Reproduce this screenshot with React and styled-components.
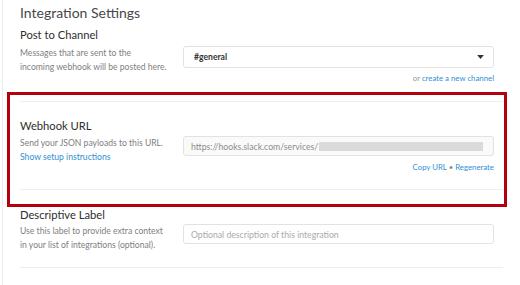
import React from "react";
import styled, { createGlobalStyle } from "styled-components";

const GlobalStyle = createGlobalStyle`
  html, body {
    margin: 0;
    padding: 0;
    background: #ffffff;
  }
  body {
    font-family: Lato, "Open Sans", "Liberation Sans", sans-serif;
    color: #555;
  }
`;

function App() {
  return (
    <>
      <GlobalStyle />
      <Page>
        <Title>Integration Settings</Title>

        <Section $top={4}>
          <Label>Post to Channel</Label>
          <Row $gap={3}>
            <Help>
              Messages that are sent to the
              <br />
              incoming webhook will be posted here.
            </Help>
            <Control>
              <Select>
                <SelectText>#general</SelectText>
                <Caret viewBox="0 0 10 6">
                  <path d="M0 0 L10 0 L5 6 Z" fill="#333" />
                </Caret>
              </Select>
              <Note $gap={4}>
                or <Link href="#">create a new channel</Link>
              </Note>
            </Control>
          </Row>
        </Section>

        <Highlight>
          <Divider $gap={6} />
          <Section $top={16}>
            <Label>Webhook URL</Label>
            <Row $gap={2}>
              <Help>
                Send your JSON payloads to this URL.
                <br />
                <Link href="#">Show setup instructions</Link>
              </Help>
              <Control>
                <Input as="div" $readOnly>
                  <span>https://hooks.slack.com/services/</span>
                  <Redacted />
                </Input>
                <Note $gap={5}>
                  <Link href="#">Copy URL</Link> <Dot>•</Dot> <Link href="#">Regenerate</Link>
                </Note>
              </Control>
            </Row>
          </Section>
          <Divider $gap={16} />
        </Highlight>

        <Section $top={0}>
          <Label>Descriptive Label</Label>
          <Row $gap={1}>
            <Help>
              Use this label to provide extra context
              <br />
              in your list of integrations (optional).
            </Help>
            <Control>
              <Input placeholder="Optional description of this integration" />
            </Control>
          </Row>
        </Section>
        <Divider $gap={15} />
      </Page>
    </>
  );
}

export default App;

const Page = styled.div`
  box-sizing: border-box;
  width: 518px;
  height: 285px;
  padding: 3px 17px 0 17px;
  border-left: 1px solid #ececec;
  margin-left: 2px;
  overflow: hidden;
`;

const Title = styled.h1`
  margin: 0;
  font-size: 14px;
  line-height: 20px;
  font-weight: 400;
  color: #484848;
`;

const Section = styled.div`
  padding-top: ${(p) => p.$top}px;
`;

const Label = styled.h2`
  margin: 0;
  font-size: 11.2px;
  line-height: 16px;
  font-weight: 400;
  color: #2e2e2e;
`;

const Row = styled.div`
  display: flex;
  align-items: flex-start;
  margin-top: ${(p) => p.$gap}px;
`;

const Help = styled.p`
  width: 163px;
  flex: none;
  margin: 0;
  font-size: 8.6px;
  line-height: 14px;
  color: #808080;
`;

const Control = styled.div`
  width: 311px;
  flex: none;
  display: flex;
  flex-direction: column;
`;

const Select = styled.div`
  box-sizing: border-box;
  height: 22px;
  display: flex;
  align-items: center;
  justify-content: space-between;
  padding: 0 9px 0 10px;
  border: 1px solid #e2e2e2;
  border-radius: 3px;
  background: #fff;
`;

const SelectText = styled.span`
  font-size: 8.6px;
  font-weight: 700;
  color: #333;
`;

const Caret = styled.svg`
  width: 7px;
  height: 4px;
`;

const Note = styled.div`
  text-align: right;
  font-size: 7.8px;
  line-height: 12px;
  margin-top: ${(p) => p.$gap}px;
  color: #999;
`;

const Link = styled.a`
  color: #2f8fd3;
  text-decoration: none;
`;

const Dot = styled.span`
  color: #888;
`;

const Input = styled.input`
  box-sizing: border-box;
  width: 100%;
  height: 20px;
  display: flex;
  align-items: center;
  padding: 0 7px;
  margin: 0;
  border: 1px solid #e2e2e2;
  border-radius: 3px;
  background: ${(p) => (p.$readOnly ? "#fafafa" : "#fff")};
  font-family: inherit;
  font-size: 8.7px;
  color: #8c8c8c;
  outline: none;
  white-space: nowrap;
  &::placeholder {
    color: #aaa;
  }
`;

const Redacted = styled.span`
  flex: 1;
  height: 9px;
  margin: 1px 3px 0 1px;
  background: #dadada;
`;

const Highlight = styled.div`
  margin: 8px -4px 0 -13px;
  padding: 0 1px 14px 10px;
  border: 3px solid #b4000c;
`;

const Divider = styled.hr`
  margin: ${(p) => p.$gap}px 0 0;
  border: 0;
  border-top: 1px solid #efefef;
  height: 0;
`;
